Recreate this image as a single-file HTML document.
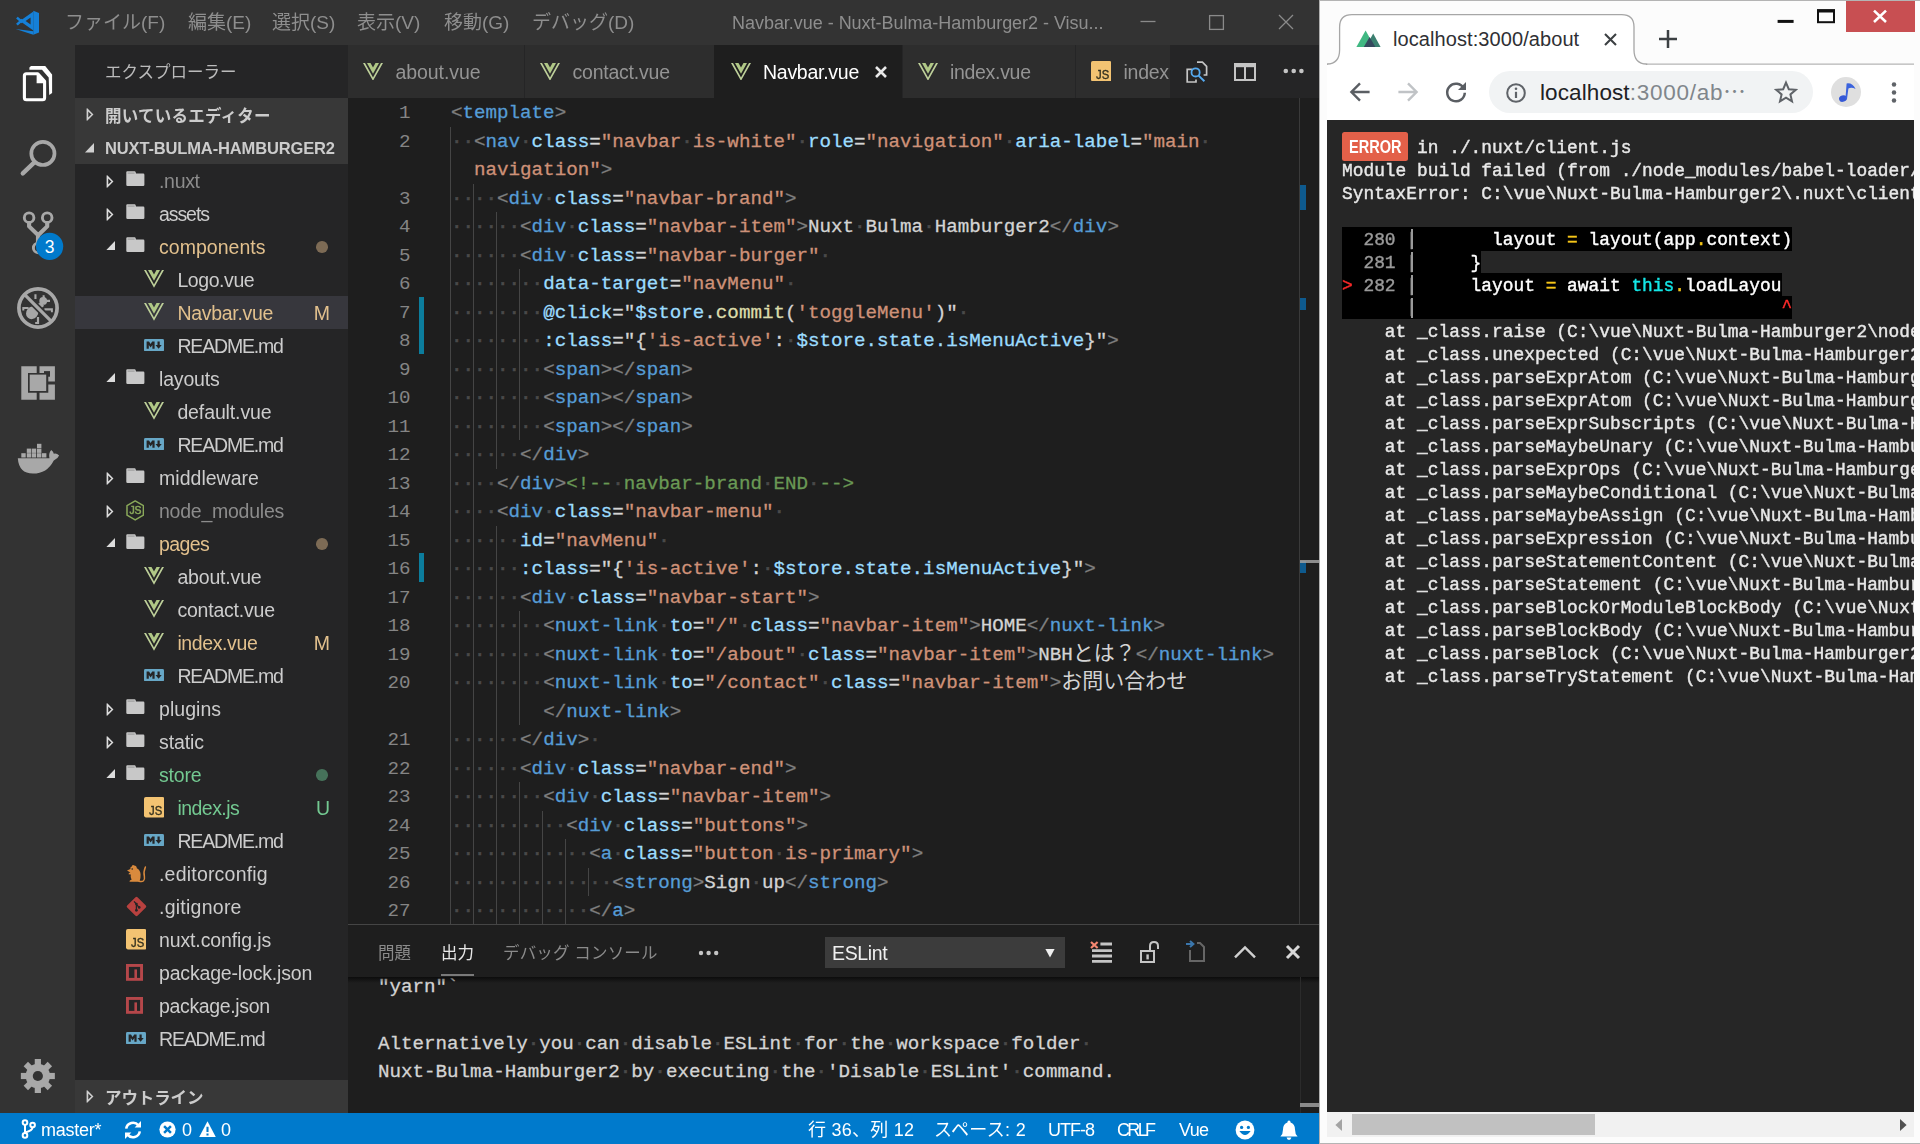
<!DOCTYPE html>
<html lang="ja"><head><meta charset="utf-8"><title>Navbar.vue - Nuxt-Bulma-Hamburger2 - Visual Studio Code</title>
<style>
html,body{margin:0;padding:0}
body{width:1920px;height:1144px;overflow:hidden;background:#fcfcfc;position:relative;
 font-family:"Liberation Sans","Noto Sans CJK JP",sans-serif;-webkit-font-smoothing:antialiased}
.ab{position:absolute}
div,span,svg{box-sizing:border-box}
.t{position:absolute;white-space:nowrap;line-height:1}
#vsc{position:absolute;left:0;top:0;width:1319px;height:1144px;background:#1e1e1e;overflow:hidden}
#title{position:absolute;left:0;top:0;width:1319px;height:45px;background:#333333;will-change:transform}
#title .m{position:absolute;top:11px;font-size:19px;color:#8e8e8e;white-space:nowrap;line-height:24px}
#act{position:absolute;left:0;top:45px;width:75px;height:1068px;background:#333333}
#side{position:absolute;left:75px;top:45px;width:273px;height:1068px;background:#252526;overflow:hidden;will-change:transform}
.sec{position:absolute;left:0;width:273px;height:33px;background:#383838}
.sec b{position:absolute;left:30px;top:0;line-height:36.5px;font-size:16.5px;color:#cccccc;font-weight:bold;white-space:nowrap}
.row{position:absolute;left:0;width:273px;height:33px}
.row .n{position:absolute;top:0;line-height:35px;font-size:19.5px;color:#cccccc;white-space:nowrap}
.row .bd{position:absolute;right:18px;top:0;line-height:35px;font-size:19.5px;white-space:nowrap}
.sel{background:#37373d}
#tabs{position:absolute;left:348px;top:45px;width:971px;height:53px;background:#252526;will-change:transform}
.tab{position:absolute;top:0;height:53px;background:#2d2d2d}
.tab .n{position:absolute;top:0;line-height:54.5px;font-size:19.5px;color:#949494;white-space:nowrap}
#ed{position:absolute;left:348px;top:98px;width:971px;height:826px;background:#1e1e1e;overflow:hidden}
.ln{position:absolute;left:0;width:62.5px;text-align:right;color:#858585;font-family:"Liberation Mono",monospace;font-size:19.2px;line-height:31.5px;height:28.5px}
.cl{position:absolute;left:103px;white-space:pre;font-family:"Liberation Mono","Noto Sans CJK JP",monospace;font-size:19.2px;line-height:31.5px;height:28.5px;color:#d4d4d4}
.jp{font-size:21px;line-height:20px;-webkit-text-stroke:0}
.cl{-webkit-text-stroke:0.3px}
.cl i{font-style:normal;color:#4a4a4a;-webkit-text-stroke:0.6px}
.g{color:#808080}.tg{color:#569cd6}.at{color:#9cdcfe}.s{color:#ce9178}.fn{color:#dcdcaa}.cm{color:#6a9955}
.ig{position:absolute;width:1.3px;background:#454545}
#panel{position:absolute;left:348px;top:924px;width:971px;height:189px;background:#1e1e1e}
.ol{position:absolute;left:30px;white-space:pre;font-family:"Liberation Mono",monospace;font-size:19.2px;line-height:28.5px;color:#d4d4d4}
.ol{-webkit-text-stroke:0.3px}
.ol i{font-style:normal;color:#4a4a4a;-webkit-text-stroke:0.6px}
#status{position:absolute;left:0;top:1113px;width:1319px;height:33px;background:#007acc;will-change:transform}
#status .t{top:0;line-height:35px;font-size:18px;color:#fff}
#chr{position:absolute;left:1319px;top:0;width:601px;height:1144px;background:#fcfcfc;overflow:hidden}
#wpage{position:absolute;left:8px;top:120px;width:587px;height:991.5px;background:#262626;overflow:hidden;will-change:transform}
.pl{position:absolute;left:15px;white-space:pre;font-family:"Liberation Mono",monospace;font-size:17.87px;line-height:23px;height:23px;color:#e8e8e8;-webkit-text-stroke:0.4px}
</style></head><body>

<div id="vsc">
<div id="title">
<svg class="ab" style="left:0;top:0" width="60" height="45" viewBox="0 0 60 45"><g fill="#1580d8"><path d="M33.3 10.8 L39 13.1 V32.5 L33.3 34.8 Z"/><path d="M15.7 29.1 L33.3 31.2 V34.8 Z"/><path d="M19.9 21 L33.4 11.4 V30.6 Z M25.6 21 L30.6 24.6 V17.4 Z" fill-rule="evenodd"/></g><path d="M22.4 22.2 L16.9 17.6 M22.4 19.8 L16.9 24.6" stroke="#1580d8" stroke-width="2.5" fill="none"/></svg>
<span class="m" style="left:65px">ファイル(F)</span>
<span class="m" style="left:188px">編集(E)</span>
<span class="m" style="left:272px">選択(S)</span>
<span class="m" style="left:357px">表示(V)</span>
<span class="m" style="left:444px">移動(G)</span>
<span class="m" style="left:532px">デバッグ(D)</span>
<span class="m" style="left:732px;top:11px;font-size:18px;color:#8e8e8e;letter-spacing:-0.032px">Navbar.vue - Nuxt-Bulma-Hamburger2 - Visu...</span>
<svg class="ab" style="left:1130px;top:0" width="189" height="45" viewBox="0 0 189 45"><path d="M10.5 21.5 H25.5" stroke="#8a8a8a" stroke-width="1.3"/><rect x="79.6" y="15.6" width="13.8" height="13.8" fill="none" stroke="#8a8a8a" stroke-width="1.3"/><path d="M149 15 L163 29 M163 15 L149 29" stroke="#8a8a8a" stroke-width="1.3"/></svg>
</div>
<div id="act">
<svg class="ab" style="left:0;top:0" width="75" height="1068" viewBox="0 45 75 1068">
<path d="M29.4 67.4 L31 66 H45.2 L52.1 74.4 V93 L49.2 94.9 L48.7 77.6 L42 69.7 H29.4 Z" fill="#fff"/><path d="M26.4 73.8 H37.8 L44.6 81.2 V97.7 Q44.6 99.7 42.6 99.7 H26.4 Q24.4 99.7 24.4 97.7 V75.8 Q24.4 73.8 26.4 73.8 Z" fill="none" stroke="#fff" stroke-width="3.1" stroke-linejoin="round"/><path d="M36.6 72.4 L46 82.6 V83.3 H36.6 Z" fill="#fff"/>
<circle cx="42.9" cy="153.4" r="11.6" fill="none" stroke="#a8a8a8" stroke-width="3.7"/><path d="M34.6 162.1 L22.8 173.4" stroke="#a8a8a8" stroke-width="4.4" stroke-linecap="round"/>
<g fill="none" stroke="#a8a8a8" stroke-width="2.9"><circle cx="29.1" cy="217.7" r="4.8"/><circle cx="47.2" cy="217.7" r="4.8"/><circle cx="38.2" cy="247.9" r="4.8"/></g><path d="M29.1 222.6 V226.4 L38 235 V243 M47.2 222.6 V226.4 L38.4 235" fill="none" stroke="#a8a8a8" stroke-width="4.1" stroke-linejoin="round"/><circle cx="49.6" cy="246.4" r="13.6" fill="#007acc"/><text x="49.6" y="252.7" text-anchor="middle" font-family="Liberation Sans,sans-serif" font-size="17.5" fill="#fff">3</text>
<g fill="#a8a8a8"><ellipse cx="32.2" cy="312.8" rx="5.9" ry="6.6" transform="rotate(40 32.2 312.8)"/><circle cx="43.2" cy="300.9" r="3.9"/><path d="M35 305 L42 302 L44 306 L38 311 Z"/><path d="M22.3 306.9 H28.6 V309.1 H24.3 V310.4 H22.3 Z M36.9 317 H39.1 V324 H35.2 V322 H36.9 Z M44.4 308.2 H52.9 V312.2 H50.9 V310.4 H44.4 Z M34.4 294.2 H36.5 V299 H34.4 Z M42.4 295.4 L44.4 295 L45 298.2 L43 298.6 Z M45.9 299.8 H50 V301.9 H45.9 Z"/></g><path d="M24.4 294.4 L51.6 321.6" stroke="#333" stroke-width="6.6"/><path d="M24.4 294.4 L51.6 321.6" stroke="#a8a8a8" stroke-width="3.3"/><circle cx="38" cy="308" r="19.1" fill="none" stroke="#a8a8a8" stroke-width="3.7"/>
<g fill="#a8a8a8"><path d="M21.3 366.2 H36.7 V372.9 H28.0 V392.8 H36.7 V399.8 H21.3 Z"/><path d="M39.5 366.2 H54.9 V381.6 H48.3 V372.9 H39.5 Z"/><path d="M39.5 399.8 H54.9 V384.4 H48.3 V392.8 H39.5 Z"/></g><rect x="44" y="371.1" width="6" height="5.6" fill="#333"/><rect x="29.7" y="374.6" width="16.5" height="16.4" fill="#a8a8a8"/>
<path d="M17.8 458.3 H49.5 Q48.3 453.5 51.2 450 Q53.5 451.8 53.8 453.8 Q56.5 452.8 59.1 455.5 Q58 458.6 53.8 460.4 Q47 473.6 32.9 473.6 Q19 473.6 17.8 458.3 Z" fill="#a8a8a8"/>
<g fill="#a8a8a8"><rect x="21.3" y="453.2" width="4.4" height="4.3"/><rect x="26.8" y="453.2" width="4.4" height="4.3"/><rect x="31.8" y="453.2" width="4.4" height="4.3"/><rect x="37" y="453.2" width="4.4" height="4.3"/><rect x="42" y="453.2" width="4.4" height="4.3"/><rect x="26.8" y="448.6" width="4.4" height="4.3"/><rect x="31.8" y="448.6" width="4.4" height="4.3"/><rect x="37" y="448.6" width="4.4" height="4.3"/><rect x="37" y="443.8" width="4.4" height="4.3"/></g>
<g transform="translate(37.85 1076)" fill="#a8a8a8"><rect x="-3.1" y="-17" width="6.2" height="9" transform="rotate(0)"/><rect x="-3.1" y="-17" width="6.2" height="9" transform="rotate(45)"/><rect x="-3.1" y="-17" width="6.2" height="9" transform="rotate(90)"/><rect x="-3.1" y="-17" width="6.2" height="9" transform="rotate(135)"/><rect x="-3.1" y="-17" width="6.2" height="9" transform="rotate(180)"/><rect x="-3.1" y="-17" width="6.2" height="9" transform="rotate(225)"/><rect x="-3.1" y="-17" width="6.2" height="9" transform="rotate(270)"/><rect x="-3.1" y="-17" width="6.2" height="9" transform="rotate(315)"/><circle r="12.2"/></g><circle cx="37.85" cy="1076" r="5.1" fill="#333"/>
</svg>
</div>
<div id="side">
<span class="t" style="left:30px;top:19px;font-size:16.5px;color:#bbbbbb;letter-spacing:0px">エクスプローラー</span>
<div class="sec" style="top:53px"><b style="letter-spacing:0.25px">開いているエディター</b></div>
<svg class="ab" style="left:11.0px;top:63.3px" width="8" height="13" viewBox="0 0 8 13"><path d="M1.5 1.6 L6.4 6.5 L1.5 11.4 Z" fill="none" stroke="#d0d0d0" stroke-width="1.5" stroke-linejoin="miter"/><path d="M1.3 1 V12" stroke="#d0d0d0" stroke-width="1"/></svg>
<div class="sec" style="top:86px"><b style="line-height:34px;letter-spacing:-0.144px">NUXT-BULMA-HAMBURGER2</b></div>
<svg class="ab" style="left:10.4px;top:98.2px" width="9" height="9.4" viewBox="0 0 9 9.4"><path d="M9 0 V9.4 H0 Z" fill="#d0d0d0"/></svg>
<div class="row" style="top:119px">
<svg class="ab" style="left:31.0px;top:10.8px" width="8" height="13" viewBox="0 0 8 13"><path d="M1.5 1.6 L6.4 6.5 L1.5 11.4 Z" fill="none" stroke="#dcdcdc" stroke-width="1.5" stroke-linejoin="miter"/><path d="M1.3 1 V12" stroke="#dcdcdc" stroke-width="1"/></svg>
<svg class="ab" style="left:50.7px;top:7px" width="19" height="15" viewBox="0 0 19 15"><path d="M0.3 1.2 Q0.3 0.2 1.3 0.2 H8.6 Q9.4 0.2 9.6 1 L10 2.6 H17.2 Q18.4 2.6 18.4 3.8 V13.8 Q18.4 15 17.2 15 H1.5 Q0.3 15 0.3 13.8 Z" fill="#c8c8c8"/><path d="M1.6 2.1 H8.6" stroke="#8e8e8e" stroke-width="0.9"/></svg>
<span class="n" style="left:84.0px;color:#8c8c8c;letter-spacing:-0.312px">.nuxt</span>
</div>
<div class="row" style="top:152px">
<svg class="ab" style="left:31.0px;top:10.8px" width="8" height="13" viewBox="0 0 8 13"><path d="M1.5 1.6 L6.4 6.5 L1.5 11.4 Z" fill="none" stroke="#dcdcdc" stroke-width="1.5" stroke-linejoin="miter"/><path d="M1.3 1 V12" stroke="#dcdcdc" stroke-width="1"/></svg>
<svg class="ab" style="left:50.7px;top:7px" width="19" height="15" viewBox="0 0 19 15"><path d="M0.3 1.2 Q0.3 0.2 1.3 0.2 H8.6 Q9.4 0.2 9.6 1 L10 2.6 H17.2 Q18.4 2.6 18.4 3.8 V13.8 Q18.4 15 17.2 15 H1.5 Q0.3 15 0.3 13.8 Z" fill="#c8c8c8"/><path d="M1.6 2.1 H8.6" stroke="#8e8e8e" stroke-width="0.9"/></svg>
<span class="n" style="left:84.0px;color:#cccccc;letter-spacing:-1.075px">assets</span>
</div>
<div class="row" style="top:185px">
<svg class="ab" style="left:31.2px;top:10.6px" width="9" height="9.4" viewBox="0 0 9 9.4"><path d="M9 0 V9.4 H0 Z" fill="#dcdcdc"/></svg>
<svg class="ab" style="left:50.7px;top:7px" width="19" height="15" viewBox="0 0 19 15"><path d="M0.3 1.2 Q0.3 0.2 1.3 0.2 H8.6 Q9.4 0.2 9.6 1 L10 2.6 H17.2 Q18.4 2.6 18.4 3.8 V13.8 Q18.4 15 17.2 15 H1.5 Q0.3 15 0.3 13.8 Z" fill="#c8c8c8"/><path d="M1.6 2.1 H8.6" stroke="#8e8e8e" stroke-width="0.9"/></svg>
<span class="n" style="left:84.0px;color:#e2c08d;letter-spacing:0.028px">components</span>
<span class="ab" style="left:241px;top:11.4px;width:11.6px;height:11.6px;border-radius:50%;background:#7d6b55"></span>
</div>
<div class="row" style="top:218px">
<svg class="ab" style="left:69.0px;top:7.3px" width="20" height="17.8" viewBox="0 0 20 17.8"><path d="M0 0 L10 17.8 L20 0 H18 L10 14.4 L2 0 Z" fill="#bed09a"/><path d="M4 0 L10 10.8 L16 0 H12.5 L10 4.4 L7.5 0 Z" fill="#b0c886"/></svg>
<span class="n" style="left:102.4px;color:#cccccc;letter-spacing:-0.421px">Logo.vue</span>
</div>
<div class="row sel" style="top:251px">
<svg class="ab" style="left:69.0px;top:7.3px" width="20" height="17.8" viewBox="0 0 20 17.8"><path d="M0 0 L10 17.8 L20 0 H18 L10 14.4 L2 0 Z" fill="#bed09a"/><path d="M4 0 L10 10.8 L16 0 H12.5 L10 4.4 L7.5 0 Z" fill="#b0c886"/></svg>
<span class="n" style="left:102.4px;color:#e2c08d;letter-spacing:-0.292px">Navbar.vue</span>
<span class="bd" style="color:#e2c08d">M</span>
</div>
<div class="row" style="top:284px">
<svg class="ab" style="left:69.0px;top:9.8px" width="20" height="12.4" viewBox="0 0 20 12.4"><rect x="0" y="0" width="20" height="12.4" rx="1.4" fill="#67a7c6"/><path d="M2.6 9.8 V2.6 H5 L6.6 5 L8.2 2.6 H10.6 V9.8 H8.4 V6 L6.6 8.5 L4.8 6 V9.8 Z" fill="#252526"/><path d="M13.5 2.6 H15.7 V6 H17.7 L14.6 9.8 L11.5 6 H13.5 Z" fill="#252526"/></svg>
<span class="n" style="left:102.4px;color:#cccccc;letter-spacing:-1.172px">README.md</span>
</div>
<div class="row" style="top:317px">
<svg class="ab" style="left:31.2px;top:10.6px" width="9" height="9.4" viewBox="0 0 9 9.4"><path d="M9 0 V9.4 H0 Z" fill="#dcdcdc"/></svg>
<svg class="ab" style="left:50.7px;top:7px" width="19" height="15" viewBox="0 0 19 15"><path d="M0.3 1.2 Q0.3 0.2 1.3 0.2 H8.6 Q9.4 0.2 9.6 1 L10 2.6 H17.2 Q18.4 2.6 18.4 3.8 V13.8 Q18.4 15 17.2 15 H1.5 Q0.3 15 0.3 13.8 Z" fill="#c8c8c8"/><path d="M1.6 2.1 H8.6" stroke="#8e8e8e" stroke-width="0.9"/></svg>
<span class="n" style="left:84.0px;color:#cccccc;letter-spacing:-0.175px">layouts</span>
</div>
<div class="row" style="top:350px">
<svg class="ab" style="left:69.0px;top:7.3px" width="20" height="17.8" viewBox="0 0 20 17.8"><path d="M0 0 L10 17.8 L20 0 H18 L10 14.4 L2 0 Z" fill="#bed09a"/><path d="M4 0 L10 10.8 L16 0 H12.5 L10 4.4 L7.5 0 Z" fill="#b0c886"/></svg>
<span class="n" style="left:102.4px;color:#cccccc;letter-spacing:-0.117px">default.vue</span>
</div>
<div class="row" style="top:383px">
<svg class="ab" style="left:69.0px;top:9.8px" width="20" height="12.4" viewBox="0 0 20 12.4"><rect x="0" y="0" width="20" height="12.4" rx="1.4" fill="#67a7c6"/><path d="M2.6 9.8 V2.6 H5 L6.6 5 L8.2 2.6 H10.6 V9.8 H8.4 V6 L6.6 8.5 L4.8 6 V9.8 Z" fill="#252526"/><path d="M13.5 2.6 H15.7 V6 H17.7 L14.6 9.8 L11.5 6 H13.5 Z" fill="#252526"/></svg>
<span class="n" style="left:102.4px;color:#cccccc;letter-spacing:-1.172px">README.md</span>
</div>
<div class="row" style="top:416px">
<svg class="ab" style="left:31.0px;top:10.8px" width="8" height="13" viewBox="0 0 8 13"><path d="M1.5 1.6 L6.4 6.5 L1.5 11.4 Z" fill="none" stroke="#dcdcdc" stroke-width="1.5" stroke-linejoin="miter"/><path d="M1.3 1 V12" stroke="#dcdcdc" stroke-width="1"/></svg>
<svg class="ab" style="left:50.7px;top:7px" width="19" height="15" viewBox="0 0 19 15"><path d="M0.3 1.2 Q0.3 0.2 1.3 0.2 H8.6 Q9.4 0.2 9.6 1 L10 2.6 H17.2 Q18.4 2.6 18.4 3.8 V13.8 Q18.4 15 17.2 15 H1.5 Q0.3 15 0.3 13.8 Z" fill="#c8c8c8"/><path d="M1.6 2.1 H8.6" stroke="#8e8e8e" stroke-width="0.9"/></svg>
<span class="n" style="left:84.0px;color:#cccccc;letter-spacing:0.028px">middleware</span>
</div>
<div class="row" style="top:449px">
<svg class="ab" style="left:31.0px;top:10.8px" width="8" height="13" viewBox="0 0 8 13"><path d="M1.5 1.6 L6.4 6.5 L1.5 11.4 Z" fill="none" stroke="#dcdcdc" stroke-width="1.5" stroke-linejoin="miter"/><path d="M1.3 1 V12" stroke="#dcdcdc" stroke-width="1"/></svg>
<svg class="ab" style="left:50.7px;top:6px" width="18.4" height="21" viewBox="0 0 18.4 21"><path d="M9.2 0.9 L17.4 5.6 V15.2 L9.2 19.9 L1 15.2 V5.6 Z" fill="none" stroke="#8aa95a" stroke-width="1.5" stroke-linejoin="round"/><text x="3.4" y="14.2" font-family="Liberation Sans,sans-serif" font-size="10.4" fill="#8aa95a" stroke="#8aa95a" stroke-width="0.5">JS</text></svg>
<span class="n" style="left:84.0px;color:#8c8c8c;letter-spacing:-0.245px">node_modules</span>
</div>
<div class="row" style="top:482px">
<svg class="ab" style="left:31.2px;top:10.6px" width="9" height="9.4" viewBox="0 0 9 9.4"><path d="M9 0 V9.4 H0 Z" fill="#dcdcdc"/></svg>
<svg class="ab" style="left:50.7px;top:7px" width="19" height="15" viewBox="0 0 19 15"><path d="M0.3 1.2 Q0.3 0.2 1.3 0.2 H8.6 Q9.4 0.2 9.6 1 L10 2.6 H17.2 Q18.4 2.6 18.4 3.8 V13.8 Q18.4 15 17.2 15 H1.5 Q0.3 15 0.3 13.8 Z" fill="#c8c8c8"/><path d="M1.6 2.1 H8.6" stroke="#8e8e8e" stroke-width="0.9"/></svg>
<span class="n" style="left:84.0px;color:#e2c08d;letter-spacing:-0.606px">pages</span>
<span class="ab" style="left:241px;top:11.4px;width:11.6px;height:11.6px;border-radius:50%;background:#7d6b55"></span>
</div>
<div class="row" style="top:515px">
<svg class="ab" style="left:69.0px;top:7.3px" width="20" height="17.8" viewBox="0 0 20 17.8"><path d="M0 0 L10 17.8 L20 0 H18 L10 14.4 L2 0 Z" fill="#bed09a"/><path d="M4 0 L10 10.8 L16 0 H12.5 L10 4.4 L7.5 0 Z" fill="#b0c886"/></svg>
<span class="n" style="left:102.4px;color:#cccccc;letter-spacing:-0.166px">about.vue</span>
</div>
<div class="row" style="top:548px">
<svg class="ab" style="left:69.0px;top:7.3px" width="20" height="17.8" viewBox="0 0 20 17.8"><path d="M0 0 L10 17.8 L20 0 H18 L10 14.4 L2 0 Z" fill="#bed09a"/><path d="M4 0 L10 10.8 L16 0 H12.5 L10 4.4 L7.5 0 Z" fill="#b0c886"/></svg>
<span class="n" style="left:102.4px;color:#cccccc;letter-spacing:-0.205px">contact.vue</span>
</div>
<div class="row" style="top:581px">
<svg class="ab" style="left:69.0px;top:7.3px" width="20" height="17.8" viewBox="0 0 20 17.8"><path d="M0 0 L10 17.8 L20 0 H18 L10 14.4 L2 0 Z" fill="#bed09a"/><path d="M4 0 L10 10.8 L16 0 H12.5 L10 4.4 L7.5 0 Z" fill="#b0c886"/></svg>
<span class="n" style="left:102.4px;color:#e2c08d;letter-spacing:-0.387px">index.vue</span>
<span class="bd" style="color:#e2c08d">M</span>
</div>
<div class="row" style="top:614px">
<svg class="ab" style="left:69.0px;top:9.8px" width="20" height="12.4" viewBox="0 0 20 12.4"><rect x="0" y="0" width="20" height="12.4" rx="1.4" fill="#67a7c6"/><path d="M2.6 9.8 V2.6 H5 L6.6 5 L8.2 2.6 H10.6 V9.8 H8.4 V6 L6.6 8.5 L4.8 6 V9.8 Z" fill="#252526"/><path d="M13.5 2.6 H15.7 V6 H17.7 L14.6 9.8 L11.5 6 H13.5 Z" fill="#252526"/></svg>
<span class="n" style="left:102.4px;color:#cccccc;letter-spacing:-1.172px">README.md</span>
</div>
<div class="row" style="top:647px">
<svg class="ab" style="left:31.0px;top:10.8px" width="8" height="13" viewBox="0 0 8 13"><path d="M1.5 1.6 L6.4 6.5 L1.5 11.4 Z" fill="none" stroke="#dcdcdc" stroke-width="1.5" stroke-linejoin="miter"/><path d="M1.3 1 V12" stroke="#dcdcdc" stroke-width="1"/></svg>
<svg class="ab" style="left:50.7px;top:7px" width="19" height="15" viewBox="0 0 19 15"><path d="M0.3 1.2 Q0.3 0.2 1.3 0.2 H8.6 Q9.4 0.2 9.6 1 L10 2.6 H17.2 Q18.4 2.6 18.4 3.8 V13.8 Q18.4 15 17.2 15 H1.5 Q0.3 15 0.3 13.8 Z" fill="#c8c8c8"/><path d="M1.6 2.1 H8.6" stroke="#8e8e8e" stroke-width="0.9"/></svg>
<span class="n" style="left:84.0px;color:#cccccc;letter-spacing:0.042px">plugins</span>
</div>
<div class="row" style="top:680px">
<svg class="ab" style="left:31.0px;top:10.8px" width="8" height="13" viewBox="0 0 8 13"><path d="M1.5 1.6 L6.4 6.5 L1.5 11.4 Z" fill="none" stroke="#dcdcdc" stroke-width="1.5" stroke-linejoin="miter"/><path d="M1.3 1 V12" stroke="#dcdcdc" stroke-width="1"/></svg>
<svg class="ab" style="left:50.7px;top:7px" width="19" height="15" viewBox="0 0 19 15"><path d="M0.3 1.2 Q0.3 0.2 1.3 0.2 H8.6 Q9.4 0.2 9.6 1 L10 2.6 H17.2 Q18.4 2.6 18.4 3.8 V13.8 Q18.4 15 17.2 15 H1.5 Q0.3 15 0.3 13.8 Z" fill="#c8c8c8"/><path d="M1.6 2.1 H8.6" stroke="#8e8e8e" stroke-width="0.9"/></svg>
<span class="n" style="left:84.0px;color:#cccccc;letter-spacing:-0.1px">static</span>
</div>
<div class="row" style="top:713px">
<svg class="ab" style="left:31.2px;top:10.6px" width="9" height="9.4" viewBox="0 0 9 9.4"><path d="M9 0 V9.4 H0 Z" fill="#dcdcdc"/></svg>
<svg class="ab" style="left:50.7px;top:7px" width="19" height="15" viewBox="0 0 19 15"><path d="M0.3 1.2 Q0.3 0.2 1.3 0.2 H8.6 Q9.4 0.2 9.6 1 L10 2.6 H17.2 Q18.4 2.6 18.4 3.8 V13.8 Q18.4 15 17.2 15 H1.5 Q0.3 15 0.3 13.8 Z" fill="#c8c8c8"/><path d="M1.6 2.1 H8.6" stroke="#8e8e8e" stroke-width="0.9"/></svg>
<span class="n" style="left:84.0px;color:#73c991;letter-spacing:-0.169px">store</span>
<span class="ab" style="left:241px;top:11.4px;width:11.6px;height:11.6px;border-radius:50%;background:#46725a"></span>
</div>
<div class="row" style="top:746px">
<svg class="ab" style="left:69.0px;top:6.3px" width="20.4" height="20.4" viewBox="0 0 20.4 20.4"><rect x="0" y="0" width="20.4" height="20.4" rx="1.8" fill="#f3c372"/><text x="5" y="17.8" font-family="Liberation Sans,sans-serif" font-size="12.4" fill="#33301f" stroke="#33301f" stroke-width="0.35" textLength="13.2" lengthAdjust="spacingAndGlyphs">JS</text></svg>
<span class="n" style="left:102.4px;color:#73c991;letter-spacing:-0.532px">index.js</span>
<span class="bd" style="color:#73c991">U</span>
</div>
<div class="row" style="top:779px">
<svg class="ab" style="left:69.0px;top:9.8px" width="20" height="12.4" viewBox="0 0 20 12.4"><rect x="0" y="0" width="20" height="12.4" rx="1.4" fill="#67a7c6"/><path d="M2.6 9.8 V2.6 H5 L6.6 5 L8.2 2.6 H10.6 V9.8 H8.4 V6 L6.6 8.5 L4.8 6 V9.8 Z" fill="#252526"/><path d="M13.5 2.6 H15.7 V6 H17.7 L14.6 9.8 L11.5 6 H13.5 Z" fill="#252526"/></svg>
<span class="n" style="left:102.4px;color:#cccccc;letter-spacing:-1.172px">README.md</span>
</div>
<div class="row" style="top:812px">
<svg class="ab" style="left:50.7px;top:6.6px" width="21" height="19" viewBox="0 0 21 19"><path d="M1 6.4 L4.4 5 Q4 2.6 5.8 2.4 Q6.4 0.4 8.2 1.4 Q10.6 1.4 10.8 4.2 Q14.4 6 14.6 10.6 Q14.8 14.6 13.4 17.8 H4 Q2.6 17.4 4.2 16.2 L5.6 15.8 Q4.2 13.6 4.8 10.6 L2.6 10.2 Q2.4 8.6 4.4 8.4 Z" fill="#d98a3d"/><path d="M13 17.2 Q19.4 18.6 18.4 12.6 Q17.2 8 19.4 3" stroke="#d98a3d" stroke-width="1.5" fill="none" stroke-linecap="round"/><circle cx="6.2" cy="5" r="0.8" fill="#252526"/></svg>
<span class="n" style="left:84.0px;color:#cccccc;letter-spacing:0.204px">.editorconfig</span>
</div>
<div class="row" style="top:845px">
<svg class="ab" style="left:50.7px;top:6px" width="21" height="21" viewBox="0 0 21 21"><rect x="3.2" y="3.2" width="14.6" height="14.6" rx="1.4" transform="rotate(45 10.5 10.5)" fill="#b8413f"/><path d="M8 5.4 L10.4 8 V14 M10.4 8.4 L13 11.2" stroke="#252526" stroke-width="1.3" fill="none"/><circle cx="10.4" cy="8" r="1.35" fill="#252526"/><circle cx="10.4" cy="14.3" r="1.35" fill="#252526"/><circle cx="13.2" cy="11.4" r="1.35" fill="#252526"/></svg>
<span class="n" style="left:84.0px;color:#cccccc;letter-spacing:0.25px">.gitignore</span>
</div>
<div class="row" style="top:878px">
<svg class="ab" style="left:50.7px;top:6.3px" width="20.4" height="20.4" viewBox="0 0 20.4 20.4"><rect x="0" y="0" width="20.4" height="20.4" rx="1.8" fill="#f3c372"/><text x="5" y="17.8" font-family="Liberation Sans,sans-serif" font-size="12.4" fill="#33301f" stroke="#33301f" stroke-width="0.35" textLength="13.2" lengthAdjust="spacingAndGlyphs">JS</text></svg>
<span class="n" style="left:84.0px;color:#cccccc;letter-spacing:-0.129px">nuxt.config.js</span>
</div>
<div class="row" style="top:911px">
<svg class="ab" style="left:51.0px;top:8px" width="17" height="16.8" viewBox="0 0 17 16.8"><rect x="1.45" y="1.45" width="14.1" height="13.9" fill="none" stroke="#b5474a" stroke-width="2.9"/><rect x="8.4" y="5.4" width="2.6" height="10" fill="#b5474a"/></svg>
<span class="n" style="left:84.0px;color:#cccccc;letter-spacing:-0.177px">package-lock.json</span>
</div>
<div class="row" style="top:944px">
<svg class="ab" style="left:51.0px;top:8px" width="17" height="16.8" viewBox="0 0 17 16.8"><rect x="1.45" y="1.45" width="14.1" height="13.9" fill="none" stroke="#b5474a" stroke-width="2.9"/><rect x="8.4" y="5.4" width="2.6" height="10" fill="#b5474a"/></svg>
<span class="n" style="left:84.0px;color:#cccccc;letter-spacing:-0.352px">package.json</span>
</div>
<div class="row" style="top:977px">
<svg class="ab" style="left:50.7px;top:9.8px" width="20" height="12.4" viewBox="0 0 20 12.4"><rect x="0" y="0" width="20" height="12.4" rx="1.4" fill="#67a7c6"/><path d="M2.6 9.8 V2.6 H5 L6.6 5 L8.2 2.6 H10.6 V9.8 H8.4 V6 L6.6 8.5 L4.8 6 V9.8 Z" fill="#252526"/><path d="M13.5 2.6 H15.7 V6 H17.7 L14.6 9.8 L11.5 6 H13.5 Z" fill="#252526"/></svg>
<span class="n" style="left:84.0px;color:#cccccc;letter-spacing:-1.172px">README.md</span>
</div>
<div class="sec" style="top:1035px"><b style="letter-spacing:-0.1px">アウトライン</b></div>
<svg class="ab" style="left:11.0px;top:1045.3px" width="8" height="13" viewBox="0 0 8 13"><path d="M1.5 1.6 L6.4 6.5 L1.5 11.4 Z" fill="none" stroke="#d0d0d0" stroke-width="1.5" stroke-linejoin="miter"/><path d="M1.3 1 V12" stroke="#d0d0d0" stroke-width="1"/></svg>
</div>
<div id="tabs">
<div class="tab" style="left:0px;width:175.5px;overflow:hidden">
<svg class="ab" style="left:15px;top:17.5px" width="20" height="17.8" viewBox="0 0 20 17.8"><path d="M0 0 L10 17.8 L20 0 H18 L10 14.4 L2 0 Z" fill="#bed09a"/><path d="M4 0 L10 10.8 L16 0 H12.5 L10 4.4 L7.5 0 Z" fill="#b0c886"/></svg>
<span class="n" style="left:47.5px;letter-spacing:-0.078px">about.vue</span>
</div>
<div class="tab" style="left:177px;width:189.5px;overflow:hidden">
<svg class="ab" style="left:15px;top:17.5px" width="20" height="17.8" viewBox="0 0 20 17.8"><path d="M0 0 L10 17.8 L20 0 H18 L10 14.4 L2 0 Z" fill="#bed09a"/><path d="M4 0 L10 10.8 L16 0 H12.5 L10 4.4 L7.5 0 Z" fill="#b0c886"/></svg>
<span class="n" style="left:47.5px;letter-spacing:-0.225px">contact.vue</span>
</div>
<div class="tab" style="left:367.5px;width:186px;background:#1e1e1e;overflow:hidden">
<svg class="ab" style="left:15px;top:17.5px" width="20" height="17.8" viewBox="0 0 20 17.8"><path d="M0 0 L10 17.8 L20 0 H18 L10 14.4 L2 0 Z" fill="#bed09a"/><path d="M4 0 L10 10.8 L16 0 H12.5 L10 4.4 L7.5 0 Z" fill="#b0c886"/></svg>
<span class="n" style="left:47.5px;color:#ffffff;letter-spacing:-0.269px">Navbar.vue</span>
<svg class="ab" style="left:158.5px;top:20px" width="14" height="14" viewBox="0 0 14 14"><path d="M2 2 L12 12 M12 2 L2 12" stroke="#e8e8e8" stroke-width="2.6"/></svg>
</div>
<div class="tab" style="left:554.5px;width:172.5px;overflow:hidden">
<svg class="ab" style="left:15px;top:17.5px" width="20" height="17.8" viewBox="0 0 20 17.8"><path d="M0 0 L10 17.8 L20 0 H18 L10 14.4 L2 0 Z" fill="#bed09a"/><path d="M4 0 L10 10.8 L16 0 H12.5 L10 4.4 L7.5 0 Z" fill="#b0c886"/></svg>
<span class="n" style="left:47.5px;letter-spacing:-0.312px">index.vue</span>
</div>
<div class="tab" style="left:728px;width:94px;overflow:hidden">
<svg class="ab" style="left:14.6px;top:16px" width="20.4" height="20.4" viewBox="0 0 20.4 20.4"><rect x="0" y="0" width="20.4" height="20.4" rx="1.8" fill="#f3c372"/><text x="5" y="17.8" font-family="Liberation Sans,sans-serif" font-size="12.4" fill="#33301f" stroke="#33301f" stroke-width="0.35" textLength="13.2" lengthAdjust="spacingAndGlyphs">JS</text></svg>
<span class="n" style="left:47.5px;letter-spacing:-0.256px">index</span>
</div>
<div class="ab" style="left:365.6px;top:0;width:3px;height:53px;background:#1e1e1e"></div>
<div class="ab" style="left:822px;top:0;width:149px;height:53px;background:#252526"></div>
<svg class="ab" style="left:836px;top:14px" width="26" height="26" viewBox="0 0 26 26"><path d="M8.4 10.4 H3.2 V23 H12 V20.4" fill="none" stroke="#c5c5c5" stroke-width="1.7"/><path d="M13 3.2 H18.4 L22.6 7.4 V16 H19.6" fill="none" stroke="#c5c5c5" stroke-width="1.7"/><circle cx="11.6" cy="13.4" r="4.1" fill="none" stroke="#55aaf0" stroke-width="1.8"/><path d="M14.6 16.6 L20.4 22.2" stroke="#55aaf0" stroke-width="2"/></svg>
<svg class="ab" style="left:886px;top:18px" width="22" height="18" viewBox="0 0 22 18"><rect x="1" y="1" width="20" height="16" fill="none" stroke="#c5c5c5" stroke-width="2"/><rect x="0" y="0" width="22" height="4.2" fill="#c5c5c5"/><rect x="10" y="1" width="2" height="16" fill="#c5c5c5"/></svg>
<svg class="ab" style="left:935px;top:23.3px" width="22" height="6" viewBox="0 0 22 6"><circle cx="2.8" cy="3" r="2.3" fill="#c5c5c5"/><circle cx="10.7" cy="3" r="2.3" fill="#c5c5c5"/><circle cx="18.4" cy="3" r="2.3" fill="#c5c5c5"/></svg>
</div>
<div id="ed">
<div class="ln" style="top:0.0px">1</div>
<div class="cl" style="top:0.0px"><span class="g">&lt;</span><span class="tg">template</span><span class="g">&gt;</span></div>
<div class="ln" style="top:28.5px">2</div>
<div class="ig" style="left:101.8px;top:28.5px;height:28.5px"></div>
<div class="cl" style="top:28.5px"><i>·</i><i>·</i><span class="g">&lt;</span><span class="tg">nav</span><i>·</i><span class="at">class</span>=<span class="s">"navbar<i>·</i>is-white"</span><i>·</i><span class="at">role</span>=<span class="s">"navigation"</span><i>·</i><span class="at">aria-label</span>=<span class="s">"main<i>·</i></span></div>
<div class="ig" style="left:101.8px;top:57.0px;height:28.5px"></div>
<div class="cl" style="top:57.0px">  <span class="s">navigation"</span><span class="g">&gt;</span></div>
<div class="ln" style="top:85.5px">3</div>
<div class="ig" style="left:101.8px;top:85.5px;height:28.5px"></div>
<div class="ig" style="left:124.8px;top:85.5px;height:28.5px"></div>
<div class="cl" style="top:85.5px"><i>·</i><i>·</i><i>·</i><i>·</i><span class="g">&lt;</span><span class="tg">div</span><i>·</i><span class="at">class</span>=<span class="s">"navbar-brand"</span><span class="g">&gt;</span></div>
<div class="ln" style="top:114.0px">4</div>
<div class="ig" style="left:101.8px;top:114.0px;height:28.5px"></div>
<div class="ig" style="left:124.8px;top:114.0px;height:28.5px"></div>
<div class="ig" style="left:147.9px;top:114.0px;height:28.5px"></div>
<div class="cl" style="top:114.0px"><i>·</i><i>·</i><i>·</i><i>·</i><i>·</i><i>·</i><span class="g">&lt;</span><span class="tg">div</span><i>·</i><span class="at">class</span>=<span class="s">"navbar-item"</span><span class="g">&gt;</span>Nuxt<i>·</i>Bulma<i>·</i>Hamburger2<span class="g">&lt;/</span><span class="tg">div</span><span class="g">&gt;</span></div>
<div class="ln" style="top:142.5px">5</div>
<div class="ig" style="left:101.8px;top:142.5px;height:28.5px"></div>
<div class="ig" style="left:124.8px;top:142.5px;height:28.5px"></div>
<div class="ig" style="left:147.9px;top:142.5px;height:28.5px"></div>
<div class="cl" style="top:142.5px"><i>·</i><i>·</i><i>·</i><i>·</i><i>·</i><i>·</i><span class="g">&lt;</span><span class="tg">div</span><i>·</i><span class="at">class</span>=<span class="s">"navbar-burger"</span><i>·</i></div>
<div class="ln" style="top:171.0px">6</div>
<div class="ig" style="left:101.8px;top:171.0px;height:28.5px"></div>
<div class="ig" style="left:124.8px;top:171.0px;height:28.5px"></div>
<div class="ig" style="left:147.9px;top:171.0px;height:28.5px"></div>
<div class="ig" style="left:170.9px;top:171.0px;height:28.5px"></div>
<div class="cl" style="top:171.0px"><i>·</i><i>·</i><i>·</i><i>·</i><i>·</i><i>·</i><i>·</i><i>·</i><span class="at">data-target</span>=<span class="s">"navMenu"</span><i>·</i></div>
<div class="ln" style="top:199.5px">7</div>
<div class="ab" style="left:71px;top:198.7px;width:4.8px;height:28.5px;background:#0c7d9d"></div>
<div class="ig" style="left:101.8px;top:199.5px;height:28.5px"></div>
<div class="ig" style="left:124.8px;top:199.5px;height:28.5px"></div>
<div class="ig" style="left:147.9px;top:199.5px;height:28.5px"></div>
<div class="ig" style="left:170.9px;top:199.5px;height:28.5px"></div>
<div class="cl" style="top:199.5px"><i>·</i><i>·</i><i>·</i><i>·</i><i>·</i><i>·</i><i>·</i><i>·</i><span class="at">@click</span>="<span class="at">$store</span>.<span class="fn">commit</span>(<span class="s">'toggleMenu'</span>)"<i>·</i></div>
<div class="ln" style="top:228.0px">8</div>
<div class="ab" style="left:71px;top:227.2px;width:4.8px;height:28.5px;background:#0c7d9d"></div>
<div class="ig" style="left:101.8px;top:228.0px;height:28.5px"></div>
<div class="ig" style="left:124.8px;top:228.0px;height:28.5px"></div>
<div class="ig" style="left:147.9px;top:228.0px;height:28.5px"></div>
<div class="ig" style="left:170.9px;top:228.0px;height:28.5px"></div>
<div class="cl" style="top:228.0px"><i>·</i><i>·</i><i>·</i><i>·</i><i>·</i><i>·</i><i>·</i><i>·</i><span class="at">:class</span>="{<span class="s">'is-active'</span>:<i>·</i><span class="at">$store.state.isMenuActive</span>}"<span class="g">&gt;</span></div>
<div class="ln" style="top:256.5px">9</div>
<div class="ig" style="left:101.8px;top:256.5px;height:28.5px"></div>
<div class="ig" style="left:124.8px;top:256.5px;height:28.5px"></div>
<div class="ig" style="left:147.9px;top:256.5px;height:28.5px"></div>
<div class="ig" style="left:170.9px;top:256.5px;height:28.5px"></div>
<div class="cl" style="top:256.5px"><i>·</i><i>·</i><i>·</i><i>·</i><i>·</i><i>·</i><i>·</i><i>·</i><span class="g">&lt;</span><span class="tg">span</span><span class="g">&gt;</span><span class="g">&lt;/</span><span class="tg">span</span><span class="g">&gt;</span></div>
<div class="ln" style="top:285.0px">10</div>
<div class="ig" style="left:101.8px;top:285.0px;height:28.5px"></div>
<div class="ig" style="left:124.8px;top:285.0px;height:28.5px"></div>
<div class="ig" style="left:147.9px;top:285.0px;height:28.5px"></div>
<div class="ig" style="left:170.9px;top:285.0px;height:28.5px"></div>
<div class="cl" style="top:285.0px"><i>·</i><i>·</i><i>·</i><i>·</i><i>·</i><i>·</i><i>·</i><i>·</i><span class="g">&lt;</span><span class="tg">span</span><span class="g">&gt;</span><span class="g">&lt;/</span><span class="tg">span</span><span class="g">&gt;</span></div>
<div class="ln" style="top:313.5px">11</div>
<div class="ig" style="left:101.8px;top:313.5px;height:28.5px"></div>
<div class="ig" style="left:124.8px;top:313.5px;height:28.5px"></div>
<div class="ig" style="left:147.9px;top:313.5px;height:28.5px"></div>
<div class="ig" style="left:170.9px;top:313.5px;height:28.5px"></div>
<div class="cl" style="top:313.5px"><i>·</i><i>·</i><i>·</i><i>·</i><i>·</i><i>·</i><i>·</i><i>·</i><span class="g">&lt;</span><span class="tg">span</span><span class="g">&gt;</span><span class="g">&lt;/</span><span class="tg">span</span><span class="g">&gt;</span></div>
<div class="ln" style="top:342.0px">12</div>
<div class="ig" style="left:101.8px;top:342.0px;height:28.5px"></div>
<div class="ig" style="left:124.8px;top:342.0px;height:28.5px"></div>
<div class="ig" style="left:147.9px;top:342.0px;height:28.5px"></div>
<div class="cl" style="top:342.0px"><i>·</i><i>·</i><i>·</i><i>·</i><i>·</i><i>·</i><span class="g">&lt;/</span><span class="tg">div</span><span class="g">&gt;</span></div>
<div class="ln" style="top:370.5px">13</div>
<div class="ig" style="left:101.8px;top:370.5px;height:28.5px"></div>
<div class="ig" style="left:124.8px;top:370.5px;height:28.5px"></div>
<div class="cl" style="top:370.5px"><i>·</i><i>·</i><i>·</i><i>·</i><span class="g">&lt;/</span><span class="tg">div</span><span class="g">&gt;</span><span class="cm">&lt;!--<i>·</i>navbar-brand<i>·</i>END<i>·</i>--&gt;</span></div>
<div class="ln" style="top:399.0px">14</div>
<div class="ig" style="left:101.8px;top:399.0px;height:28.5px"></div>
<div class="ig" style="left:124.8px;top:399.0px;height:28.5px"></div>
<div class="cl" style="top:399.0px"><i>·</i><i>·</i><i>·</i><i>·</i><span class="g">&lt;</span><span class="tg">div</span><i>·</i><span class="at">class</span>=<span class="s">"navbar-menu"</span><i>·</i></div>
<div class="ln" style="top:427.5px">15</div>
<div class="ig" style="left:101.8px;top:427.5px;height:28.5px"></div>
<div class="ig" style="left:124.8px;top:427.5px;height:28.5px"></div>
<div class="ig" style="left:147.9px;top:427.5px;height:28.5px"></div>
<div class="cl" style="top:427.5px"><i>·</i><i>·</i><i>·</i><i>·</i><i>·</i><i>·</i><span class="at">id</span>=<span class="s">"navMenu"</span><i>·</i></div>
<div class="ln" style="top:456.0px">16</div>
<div class="ab" style="left:71px;top:455.2px;width:4.8px;height:28.5px;background:#0c7d9d"></div>
<div class="ig" style="left:101.8px;top:456.0px;height:28.5px"></div>
<div class="ig" style="left:124.8px;top:456.0px;height:28.5px"></div>
<div class="ig" style="left:147.9px;top:456.0px;height:28.5px"></div>
<div class="cl" style="top:456.0px"><i>·</i><i>·</i><i>·</i><i>·</i><i>·</i><i>·</i><span class="at">:class</span>="{<span class="s">'is-active'</span>:<i>·</i><span class="at">$store.state.isMenuActive</span>}"<span class="g">&gt;</span></div>
<div class="ln" style="top:484.5px">17</div>
<div class="ig" style="left:101.8px;top:484.5px;height:28.5px"></div>
<div class="ig" style="left:124.8px;top:484.5px;height:28.5px"></div>
<div class="ig" style="left:147.9px;top:484.5px;height:28.5px"></div>
<div class="cl" style="top:484.5px"><i>·</i><i>·</i><i>·</i><i>·</i><i>·</i><i>·</i><span class="g">&lt;</span><span class="tg">div</span><i>·</i><span class="at">class</span>=<span class="s">"navbar-start"</span><span class="g">&gt;</span></div>
<div class="ln" style="top:513.0px">18</div>
<div class="ig" style="left:101.8px;top:513.0px;height:28.5px"></div>
<div class="ig" style="left:124.8px;top:513.0px;height:28.5px"></div>
<div class="ig" style="left:147.9px;top:513.0px;height:28.5px"></div>
<div class="ig" style="left:170.9px;top:513.0px;height:28.5px"></div>
<div class="cl" style="top:513.0px"><i>·</i><i>·</i><i>·</i><i>·</i><i>·</i><i>·</i><i>·</i><i>·</i><span class="g">&lt;</span><span class="tg">nuxt-link</span><i>·</i><span class="at">to</span>=<span class="s">"/"</span><i>·</i><span class="at">class</span>=<span class="s">"navbar-item"</span><span class="g">&gt;</span>HOME<span class="g">&lt;/</span><span class="tg">nuxt-link</span><span class="g">&gt;</span></div>
<div class="ln" style="top:541.5px">19</div>
<div class="ig" style="left:101.8px;top:541.5px;height:28.5px"></div>
<div class="ig" style="left:124.8px;top:541.5px;height:28.5px"></div>
<div class="ig" style="left:147.9px;top:541.5px;height:28.5px"></div>
<div class="ig" style="left:170.9px;top:541.5px;height:28.5px"></div>
<div class="cl" style="top:541.5px"><i>·</i><i>·</i><i>·</i><i>·</i><i>·</i><i>·</i><i>·</i><i>·</i><span class="g">&lt;</span><span class="tg">nuxt-link</span><i>·</i><span class="at">to</span>=<span class="s">"/about"</span><i>·</i><span class="at">class</span>=<span class="s">"navbar-item"</span><span class="g">&gt;</span>NBH<span class="jp">とは？</span><span class="g">&lt;/</span><span class="tg">nuxt-link</span><span class="g">&gt;</span></div>
<div class="ln" style="top:570.0px">20</div>
<div class="ig" style="left:101.8px;top:570.0px;height:28.5px"></div>
<div class="ig" style="left:124.8px;top:570.0px;height:28.5px"></div>
<div class="ig" style="left:147.9px;top:570.0px;height:28.5px"></div>
<div class="ig" style="left:170.9px;top:570.0px;height:28.5px"></div>
<div class="cl" style="top:570.0px"><i>·</i><i>·</i><i>·</i><i>·</i><i>·</i><i>·</i><i>·</i><i>·</i><span class="g">&lt;</span><span class="tg">nuxt-link</span><i>·</i><span class="at">to</span>=<span class="s">"/contact"</span><i>·</i><span class="at">class</span>=<span class="s">"navbar-item"</span><span class="g">&gt;</span><span class="jp">お問い合わせ</span></div>
<div class="ig" style="left:101.8px;top:598.5px;height:28.5px"></div>
<div class="ig" style="left:124.8px;top:598.5px;height:28.5px"></div>
<div class="ig" style="left:147.9px;top:598.5px;height:28.5px"></div>
<div class="ig" style="left:170.9px;top:598.5px;height:28.5px"></div>
<div class="cl" style="top:598.5px">        <span class="g">&lt;/</span><span class="tg">nuxt-link</span><span class="g">&gt;</span></div>
<div class="ln" style="top:627.0px">21</div>
<div class="ig" style="left:101.8px;top:627.0px;height:28.5px"></div>
<div class="ig" style="left:124.8px;top:627.0px;height:28.5px"></div>
<div class="ig" style="left:147.9px;top:627.0px;height:28.5px"></div>
<div class="cl" style="top:627.0px"><i>·</i><i>·</i><i>·</i><i>·</i><i>·</i><i>·</i><span class="g">&lt;/</span><span class="tg">div</span><span class="g">&gt;</span><i>·</i></div>
<div class="ln" style="top:655.5px">22</div>
<div class="ig" style="left:101.8px;top:655.5px;height:28.5px"></div>
<div class="ig" style="left:124.8px;top:655.5px;height:28.5px"></div>
<div class="ig" style="left:147.9px;top:655.5px;height:28.5px"></div>
<div class="cl" style="top:655.5px"><i>·</i><i>·</i><i>·</i><i>·</i><i>·</i><i>·</i><span class="g">&lt;</span><span class="tg">div</span><i>·</i><span class="at">class</span>=<span class="s">"navbar-end"</span><span class="g">&gt;</span></div>
<div class="ln" style="top:684.0px">23</div>
<div class="ig" style="left:101.8px;top:684.0px;height:28.5px"></div>
<div class="ig" style="left:124.8px;top:684.0px;height:28.5px"></div>
<div class="ig" style="left:147.9px;top:684.0px;height:28.5px"></div>
<div class="ig" style="left:170.9px;top:684.0px;height:28.5px"></div>
<div class="cl" style="top:684.0px"><i>·</i><i>·</i><i>·</i><i>·</i><i>·</i><i>·</i><i>·</i><i>·</i><span class="g">&lt;</span><span class="tg">div</span><i>·</i><span class="at">class</span>=<span class="s">"navbar-item"</span><span class="g">&gt;</span></div>
<div class="ln" style="top:712.5px">24</div>
<div class="ig" style="left:101.8px;top:712.5px;height:28.5px"></div>
<div class="ig" style="left:124.8px;top:712.5px;height:28.5px"></div>
<div class="ig" style="left:147.9px;top:712.5px;height:28.5px"></div>
<div class="ig" style="left:170.9px;top:712.5px;height:28.5px"></div>
<div class="ig" style="left:194.0px;top:712.5px;height:28.5px"></div>
<div class="cl" style="top:712.5px"><i>·</i><i>·</i><i>·</i><i>·</i><i>·</i><i>·</i><i>·</i><i>·</i><i>·</i><i>·</i><span class="g">&lt;</span><span class="tg">div</span><i>·</i><span class="at">class</span>=<span class="s">"buttons"</span><span class="g">&gt;</span></div>
<div class="ln" style="top:741.0px">25</div>
<div class="ig" style="left:101.8px;top:741.0px;height:28.5px"></div>
<div class="ig" style="left:124.8px;top:741.0px;height:28.5px"></div>
<div class="ig" style="left:147.9px;top:741.0px;height:28.5px"></div>
<div class="ig" style="left:170.9px;top:741.0px;height:28.5px"></div>
<div class="ig" style="left:194.0px;top:741.0px;height:28.5px"></div>
<div class="ig" style="left:217.0px;top:741.0px;height:28.5px"></div>
<div class="cl" style="top:741.0px"><i>·</i><i>·</i><i>·</i><i>·</i><i>·</i><i>·</i><i>·</i><i>·</i><i>·</i><i>·</i><i>·</i><i>·</i><span class="g">&lt;</span><span class="tg">a</span><i>·</i><span class="at">class</span>=<span class="s">"button<i>·</i>is-primary"</span><span class="g">&gt;</span></div>
<div class="ln" style="top:769.5px">26</div>
<div class="ig" style="left:101.8px;top:769.5px;height:28.5px"></div>
<div class="ig" style="left:124.8px;top:769.5px;height:28.5px"></div>
<div class="ig" style="left:147.9px;top:769.5px;height:28.5px"></div>
<div class="ig" style="left:170.9px;top:769.5px;height:28.5px"></div>
<div class="ig" style="left:194.0px;top:769.5px;height:28.5px"></div>
<div class="ig" style="left:217.0px;top:769.5px;height:28.5px"></div>
<div class="ig" style="left:240.0px;top:769.5px;height:28.5px"></div>
<div class="cl" style="top:769.5px"><i>·</i><i>·</i><i>·</i><i>·</i><i>·</i><i>·</i><i>·</i><i>·</i><i>·</i><i>·</i><i>·</i><i>·</i><i>·</i><i>·</i><span class="g">&lt;</span><span class="tg">strong</span><span class="g">&gt;</span>Sign<i>·</i>up<span class="g">&lt;/</span><span class="tg">strong</span><span class="g">&gt;</span></div>
<div class="ln" style="top:798.0px">27</div>
<div class="ig" style="left:101.8px;top:798.0px;height:28.5px"></div>
<div class="ig" style="left:124.8px;top:798.0px;height:28.5px"></div>
<div class="ig" style="left:147.9px;top:798.0px;height:28.5px"></div>
<div class="ig" style="left:170.9px;top:798.0px;height:28.5px"></div>
<div class="ig" style="left:194.0px;top:798.0px;height:28.5px"></div>
<div class="ig" style="left:217.0px;top:798.0px;height:28.5px"></div>
<div class="cl" style="top:798.0px"><i>·</i><i>·</i><i>·</i><i>·</i><i>·</i><i>·</i><i>·</i><i>·</i><i>·</i><i>·</i><i>·</i><i>·</i><span class="g">&lt;/</span><span class="tg">a</span><span class="g">&gt;</span></div>
<div class="ln" style="top:826.5px">28</div>
<div class="ig" style="left:101.8px;top:826.5px;height:28.5px"></div>
<div class="ig" style="left:124.8px;top:826.5px;height:28.5px"></div>
<div class="ig" style="left:147.9px;top:826.5px;height:28.5px"></div>
<div class="ig" style="left:170.9px;top:826.5px;height:28.5px"></div>
<div class="ig" style="left:194.0px;top:826.5px;height:28.5px"></div>
<div class="cl" style="top:826.5px"><i>·</i><i>·</i><i>·</i><i>·</i><i>·</i><i>·</i><i>·</i><i>·</i><i>·</i><i>·</i><span class="g">&lt;/</span><span class="tg">div</span><span class="g">&gt;</span></div>
<div class="ab" style="left:951px;top:0;width:1px;height:827px;background:#3a3a3a"></div>
<div class="ab" style="left:952.4px;top:87px;width:6px;height:25px;background:#0e5a8e"></div>
<div class="ab" style="left:952.4px;top:200px;width:6px;height:12px;background:#0e5a8e"></div>
<div class="ab" style="left:952.4px;top:463px;width:6px;height:12px;background:#0e5a8e"></div>
<div class="ab" style="left:952px;top:462px;width:19px;height:3px;background:rgba(160,160,160,0.85)"></div>
</div>
<div id="panel">
<div class="ab" style="left:0;top:0;width:971px;height:1.4px;background:#454545"></div>
<div class="ab" style="left:0;top:2px;width:952px;height:50px;will-change:transform">
<span class="t" style="left:30px;top:18.5px;font-size:16.5px;color:#8b8b8b">問題</span>
<span class="t" style="left:93px;top:18.5px;font-size:16.5px;color:#e7e7e7">出力</span>
<div class="ab" style="left:93px;top:48px;width:33px;height:2px;background:#7a7a7a"></div>
<span class="t" style="left:155px;top:18.5px;font-size:16.5px;color:#8b8b8b;letter-spacing:0.15px">デバッグ コンソール</span>
</div>
<svg class="ab" style="left:350px;top:26px" width="22" height="6" viewBox="0 0 22 6"><circle cx="3" cy="3" r="2.2" fill="#c5c5c5"/><circle cx="10.6" cy="3" r="2.2" fill="#c5c5c5"/><circle cx="18.2" cy="3" r="2.2" fill="#c5c5c5"/></svg>
<div class="ab" style="left:477px;top:12.5px;width:240px;height:31.5px;background:#3c3c3c"></div>
<span class="t" style="left:484px;top:19.5px;font-size:19.5px;color:#f0f0f0;letter-spacing:-0.35px;will-change:transform">ESLint</span>
<svg class="ab" style="left:696px;top:22.5px" width="12" height="12" viewBox="0 0 12 12"><path d="M1.4 2 H10.6 L6 10.4 Z" fill="#f0f0f0"/></svg>
<svg class="ab" style="left:741px;top:14.5px" width="26" height="26" viewBox="0 0 26 26"><path d="M2 3 L8.6 9 M8.6 3 L2 9" stroke="#f48771" stroke-width="2.2"/><path d="M11.4 5 H23 M3 11.6 H23 M3 17 H23 M3 22.4 H23" stroke="#c5c5c5" stroke-width="2.9"/></svg>
<svg class="ab" style="left:790px;top:14.5px" width="24" height="26" viewBox="0 0 24 26"><rect x="3" y="12" width="13" height="11" fill="none" stroke="#c5c5c5" stroke-width="2"/><path d="M12 12 V7 Q12 3 16 3 Q20 3 20 7 V10" fill="none" stroke="#c5c5c5" stroke-width="2"/><rect x="8.4" y="15.4" width="2.4" height="5" fill="#c5c5c5"/></svg>
<svg class="ab" style="left:836px;top:14.5px" width="26" height="26" viewBox="0 0 26 26"><path d="M6 11 V22 H20 V8 L16 4 H13" fill="none" stroke="#666666" stroke-width="2"/><path d="M2 5 H9 M6 2 L9.4 5 L6 8" fill="none" stroke="#3a76ac" stroke-width="2"/></svg>
<svg class="ab" style="left:885px;top:19.5px" width="24" height="16" viewBox="0 0 24 16"><path d="M2 13.4 L12 3.4 L22 13.4" fill="none" stroke="#d0d0d0" stroke-width="2.4"/></svg>
<svg class="ab" style="left:937px;top:20px" width="16" height="16" viewBox="0 0 16 16"><path d="M2 2 L14 14 M14 2 L2 14" stroke="#d8d8d8" stroke-width="3"/></svg>
<div class="ab" style="left:0;top:53px;width:952px;height:136px;overflow:hidden">
<div class="ol" style="top:-4.5px">"yarn"`</div>
<div class="ol" style="top:24.0px"></div>
<div class="ol" style="top:52.5px">Alternatively<i>·</i>you<i>·</i>can<i>·</i>disable<i>·</i>ESLint<i>·</i>for<i>·</i>the<i>·</i>workspace<i>·</i>folder<i>·</i></div>
<div class="ol" style="top:81.0px">Nuxt-Bulma-Hamburger2<i>·</i>by<i>·</i>executing<i>·</i>the<i>·</i>'Disable<i>·</i>ESLint'<i>·</i>command.</div>
</div>
<div class="ab" style="left:0;top:53px;width:971px;height:6px;background:linear-gradient(#000000 0,rgba(0,0,0,0) 100%);opacity:.6"></div>
<div class="ab" style="left:952px;top:53px;width:1px;height:136px;background:#2b2b2b"></div>
<div class="ab" style="left:952px;top:179.3px;width:19px;height:3.5px;background:#8a8a8a"></div>
</div>
<div id="status">
<svg class="ab" style="left:21px;top:6.4px" width="16" height="20" viewBox="0 0 16 20"><g fill="none" stroke="#fff" stroke-width="2"><circle cx="4" cy="3.6" r="2.3"/><circle cx="4" cy="16.4" r="2.3"/><circle cx="11.6" cy="6" r="2.3"/><path d="M4 6 V14 M11.6 8.4 Q11.4 11.6 4.4 13.4"/></g></svg>
<span class="t" style="left:41px;letter-spacing:-0.25px;">master*</span>
<svg class="ab" style="left:123px;top:6.6px" width="20" height="20" viewBox="0 0 20 20"><g fill="none" stroke="#fff" stroke-width="2.6"><path d="M3.2 8.6 A6.9 6.9 0 0 1 15.4 5.4"/><path d="M16.8 11.4 A6.9 6.9 0 0 1 4.6 14.6"/></g><path d="M11.6 7.4 H18 V1 Z M8.4 12.6 H2 V19 Z" fill="#fff"/></svg>
<svg class="ab" style="left:158.6px;top:8.2px" width="17" height="17" viewBox="0 0 18 18"><circle cx="9" cy="9" r="8.6" fill="#fff"/><path d="M5.4 5.4 L12.6 12.6 M12.6 5.4 L5.4 12.6" stroke="#007acc" stroke-width="2.6"/></svg>
<span class="t" style="left:182px;">0</span>
<svg class="ab" style="left:198.6px;top:8px" width="17" height="16.4" viewBox="0 0 18 17"><path d="M9 0.2 L17.8 16.8 H0.2 Z" fill="#fff"/><path d="M9 6 V11.6 M9 13 V15.2" stroke="#007acc" stroke-width="2.2"/></svg>
<span class="t" style="left:221px;">0</span>
<span class="t" style="left:808px;letter-spacing:0.25px">行 36、列 12</span>
<span class="t" style="left:934px;letter-spacing:0.3px">スペース: 2</span>
<span class="t" style="left:1048px;letter-spacing:-1.0px;">UTF-8</span>
<span class="t" style="left:1117px;letter-spacing:-2.667px;">CRLF</span>
<span class="t" style="left:1179px;letter-spacing:-0.688px;">Vue</span>
<svg class="ab" style="left:1235px;top:7px" width="20" height="20" viewBox="0 0 20 20"><circle cx="10" cy="10" r="9.4" fill="#fff"/><circle cx="6.6" cy="7.4" r="1.6" fill="#007acc"/><circle cx="13.4" cy="7.4" r="1.6" fill="#007acc"/><path d="M4.4 11 Q10 19 15.6 11 Z" fill="#007acc"/></svg>
<svg class="ab" style="left:1279px;top:6px" width="20" height="22" viewBox="0 0 20 22"><path d="M10 1.6 Q11.6 1.6 11.6 3.4 Q16 5 16 10.4 Q16 15 18.6 17.4 H1.4 Q4 15 4 10.4 Q4 5 8.4 3.4 Q8.4 1.6 10 1.6 Z" fill="#fff"/><path d="M7.6 18.6 H12.4 Q12 21 10 21 Q8 21 7.6 18.6 Z" fill="#fff"/></svg>
</div>
</div>
<div id="chr">
<div class="ab" style="left:0;top:0;width:601px;height:1px;background:#b4b4b4"></div>
<div class="ab" style="left:0;top:0;width:1px;height:1144px;background:#b0b0b0"></div>
<div class="ab" style="left:0;top:1143px;width:601px;height:1px;background:#b4b4b4"></div>
<div class="ab" style="left:527px;top:1px;width:69px;height:31px;background:#c84f52"></div>
<svg class="ab" style="left:455px;top:1px" width="141" height="31" viewBox="0 0 141 31"><path d="M3.6 20.4 H19.6" stroke="#111" stroke-width="3"/><rect x="44" y="9.8" width="16" height="11.4" fill="none" stroke="#111" stroke-width="2"/><path d="M43 9.8 H61" stroke="#111" stroke-width="3.4"/><path d="M100 9.6 L112 21 M112 9.6 L100 21" stroke="#fff" stroke-width="2.6"/></svg>
<svg class="ab" style="left:8px;top:13px" width="587" height="54" viewBox="0 0 587 54"><path d="M0 51.2 H587" stroke="#b6b6b6" stroke-width="1.3"/><path d="M0 51.2 Q12.6 50.6 12.6 37 V14 Q12.6 1.6 25 1.6 H294.6 Q307 1.6 307 14 V37 Q307 50.6 319.6 51.2 V54 H0 Z" fill="#ffffff" stroke="#a6a6a6" stroke-width="1.3"/><rect x="0" y="52" width="587" height="3" fill="#ffffff"/></svg>
<div class="ab" style="left:8px;top:65px;width:587px;height:55px;background:#ffffff"></div>
<svg class="ab" style="left:37px;top:29px" width="26" height="19" viewBox="0 0 26 19"><path d="M0.4 18 L9.6 1.4 L18.8 18 Z" fill="#41b883"/><path d="M9.6 18 L17.2 4.6 L24.6 18 Z" fill="#3b8070"/><path d="M7.8 18 L13.6 8 L19.4 18 Z" fill="#35495e"/></svg>
<span class="t" style="left:74px;top:28.5px;font-size:20px;color:#2f3034;letter-spacing:0.083px">localhost:3000/about</span>
<svg class="ab" style="left:284px;top:32px" width="15" height="15" viewBox="0 0 15 15"><path d="M2 2 L13 13 M13 2 L2 13" stroke="#3c4043" stroke-width="2.1"/></svg>
<svg class="ab" style="left:338.5px;top:29px" width="20" height="20" viewBox="0 0 20 20"><path d="M10 1 V19 M1 10 H19" stroke="#3c4043" stroke-width="2.5"/></svg>
<svg class="ab" style="left:30px;top:81px" width="22" height="22" viewBox="0 0 22 22"><path d="M20.6 11 H3 M11 2.4 L2.4 11 L11 19.6" fill="none" stroke="#5a5e63" stroke-width="2.4"/></svg>
<svg class="ab" style="left:78px;top:81px" width="22" height="22" viewBox="0 0 22 22"><path d="M1.4 11 H19 M11 2.4 L19.6 11 L11 19.6" fill="none" stroke="#c0c3c6" stroke-width="2.4"/></svg>
<svg class="ab" style="left:125px;top:79.5px" width="24" height="24" viewBox="0 0 24 24"><path d="M19.8 8.4 A8.8 8.8 0 1 0 20.8 12.8" fill="none" stroke="#5a5e63" stroke-width="2.5"/><path d="M22 2 V10 H14 Z" fill="#5a5e63"/></svg>
<div class="ab" style="left:170px;top:71px;width:324px;height:42px;border-radius:21px;background:#f1f3f4"></div>
<svg class="ab" style="left:186px;top:81.5px" width="22" height="22" viewBox="0 0 22 22"><circle cx="11" cy="11" r="8.8" fill="none" stroke="#5f6368" stroke-width="2"/><path d="M11 9.8 V16" stroke="#5f6368" stroke-width="2.2"/><circle cx="11" cy="6.8" r="1.3" fill="#5f6368"/></svg>
<span class="t" style="left:221px;top:82px;font-size:22.5px;color:#202124;letter-spacing:0.1px">localhost<span style="color:#80868b;letter-spacing:0.75px">:3000/ab⋯</span></span>
<svg class="ab" style="left:455px;top:80px" width="24" height="24" viewBox="0 0 24 24"><path d="M12 2.6 L14.8 9.2 L21.8 9.8 L16.4 14.4 L18 21.4 L12 17.6 L6 21.4 L7.6 14.4 L2.2 9.8 L9.2 9.2 Z" fill="none" stroke="#5f6368" stroke-width="2" stroke-linejoin="miter"/></svg>
<div class="ab" style="left:512px;top:77px;width:30.4px;height:30.4px;border-radius:50%;background:#dfdfdf"></div>
<svg class="ab" style="left:518px;top:80px" width="20" height="24" viewBox="0 0 20 24"><ellipse cx="6" cy="18.6" rx="4" ry="3.2" transform="rotate(-20 6 18.6)" fill="#3558d6"/><path d="M8.4 19 L9.6 3.4 Q15.6 2.6 18.6 9 Q14.6 6.6 11.4 8.4 L10 19 Z" fill="#3b63dd"/></svg>
<svg class="ab" style="left:572px;top:82px" width="6" height="22" viewBox="0 0 6 22"><circle cx="3" cy="2.6" r="2.25" fill="#5f6368"/><circle cx="3" cy="10.6" r="2.25" fill="#5f6368"/><circle cx="3" cy="18.6" r="2.25" fill="#5f6368"/></svg>
<div id="wpage">
<div class="ab" style="left:15px;top:11.7px;width:66.3px;height:29px;border-radius:2.5px;background:#e36049"></div>
<span class="t" style="left:22px;top:17.8px;font-size:18px;font-weight:bold;color:#fff;font-family:'Liberation Sans',sans-serif;display:inline-block;transform:scaleX(0.81);transform-origin:0 0">ERROR</span>
<div class="pl" style="top:16.5px">       in ./.nuxt/client.js</div>
<div class="pl" style="top:39.5px">Module build failed (from ./node_modules/babel-loader/lib/index.js):</div>
<div class="pl" style="top:62.5px">SyntaxError: C:\vue\Nuxt-Bulma-Hamburger2\.nuxt\client.js: Unexpected token</div>
<div class="ab" style="left:15px;top:107px;width:450.2px;height:23.5px;background:#000"></div>
<div class="ab" style="left:15px;top:130px;width:139.4px;height:23.5px;background:#000"></div>
<div class="ab" style="left:15px;top:153px;width:439.5px;height:23.5px;background:#000"></div>
<div class="ab" style="left:15px;top:176px;width:450.2px;height:22.5px;background:#000"></div>
<div class="ab" style="left:83.8px;top:109.3px;width:1.8px;height:19.6px;background:#9a9a9a"></div>
<div class="ab" style="left:83.8px;top:132.3px;width:1.8px;height:19.6px;background:#9a9a9a"></div>
<div class="ab" style="left:83.8px;top:155.3px;width:1.8px;height:19.6px;background:#9a9a9a"></div>
<div class="ab" style="left:83.8px;top:178.3px;width:1.8px;height:19.6px;background:#9a9a9a"></div>
<div class="pl" style="top:108.5px;color:#fff">  <span style="color:#9a9a9a">280 |</span>       layout <span style="color:#f5c518">=</span> layout(app<span style="color:#f5c518">.</span>context)</div>
<div class="pl" style="top:131.5px;color:#fff">  <span style="color:#9a9a9a">281 |</span>     }</div>
<div class="pl" style="top:154.5px;color:#fff"><span style="color:#ff2a2a">&gt;</span> <span style="color:#9a9a9a">282 |</span>     layout <span style="color:#f5c518">=</span> await <span style="color:#14e6e6">this</span><span style="color:#f5c518">.</span>loadLayou</div>
<div class="pl" style="top:175.5px;color:#fff">  <span style="color:#9a9a9a">    |</span>                                  <span style="color:#ff2a2a">^</span></div>
<div class="pl" style="top:200.5px">    at _class.raise (C:\vue\Nuxt-Bulma-Hamburger2\node_modules\@babel\parser\lib\index.js:3831:17)</div>
<div class="pl" style="top:223.5px">    at _class.unexpected (C:\vue\Nuxt-Bulma-Hamburger2\node_modules\@babel\parser\lib\index.js:5143:16)</div>
<div class="pl" style="top:246.5px">    at _class.parseExprAtom (C:\vue\Nuxt-Bulma-Hamburger2\node_modules\@babel\parser\lib\index.js:6283:20)</div>
<div class="pl" style="top:269.5px">    at _class.parseExprAtom (C:\vue\Nuxt-Bulma-Hamburger2\node_modules\@babel\parser\lib\index.js:3552:20)</div>
<div class="pl" style="top:292.5px">    at _class.parseExprSubscripts (C:\vue\Nuxt-Bulma-Hamburger2\node_modules\@babel\parser\lib\index.js:5862:23)</div>
<div class="pl" style="top:315.5px">    at _class.parseMaybeUnary (C:\vue\Nuxt-Bulma-Hamburger2\node_modules\@babel\parser\lib\index.js:5842:21)</div>
<div class="pl" style="top:338.5px">    at _class.parseExprOps (C:\vue\Nuxt-Bulma-Hamburger2\node_modules\@babel\parser\lib\index.js:5729:23)</div>
<div class="pl" style="top:361.5px">    at _class.parseMaybeConditional (C:\vue\Nuxt-Bulma-Hamburger2\node_modules\@babel\parser\lib\index.js:5702:23)</div>
<div class="pl" style="top:384.5px">    at _class.parseMaybeAssign (C:\vue\Nuxt-Bulma-Hamburger2\node_modules\@babel\parser\lib\index.js:5647:21)</div>
<div class="pl" style="top:407.5px">    at _class.parseExpression (C:\vue\Nuxt-Bulma-Hamburger2\node_modules\@babel\parser\lib\index.js:5595:23)</div>
<div class="pl" style="top:430.5px">    at _class.parseStatementContent (C:\vue\Nuxt-Bulma-Hamburger2\node_modules\@babel\parser\lib\index.js:7378:23)</div>
<div class="pl" style="top:453.5px">    at _class.parseStatement (C:\vue\Nuxt-Bulma-Hamburger2\node_modules\@babel\parser\lib\index.js:7243:17)</div>
<div class="pl" style="top:476.5px">    at _class.parseBlockOrModuleBlockBody (C:\vue\Nuxt-Bulma-Hamburger2\node_modules\@babel\parser\lib\index.js:7810:25)</div>
<div class="pl" style="top:499.5px">    at _class.parseBlockBody (C:\vue\Nuxt-Bulma-Hamburger2\node_modules\@babel\parser\lib\index.js:7797:10)</div>
<div class="pl" style="top:522.5px">    at _class.parseBlock (C:\vue\Nuxt-Bulma-Hamburger2\node_modules\@babel\parser\lib\index.js:7786:10)</div>
<div class="pl" style="top:545.5px">    at _class.parseTryStatement (C:\vue\Nuxt-Bulma-Hamburger2\node_modules\@babel\parser\lib\index.js:7621:23)</div>
</div>
<div class="ab" style="left:8px;top:1111.5px;width:587px;height:25.5px;background:#f1f1f1"></div>
<div class="ab" style="left:33px;top:1114px;width:243px;height:21px;background:#c1c1c1"></div>
<svg class="ab" style="left:15px;top:1118px" width="10" height="14" viewBox="0 0 10 14"><path d="M8 1 V13 L1.4 7 Z" fill="#a3a3a3"/></svg>
<svg class="ab" style="left:579px;top:1118px" width="10" height="14" viewBox="0 0 10 14"><path d="M2 1 V13 L8.6 7 Z" fill="#505050"/></svg>
</div>
</body></html>
